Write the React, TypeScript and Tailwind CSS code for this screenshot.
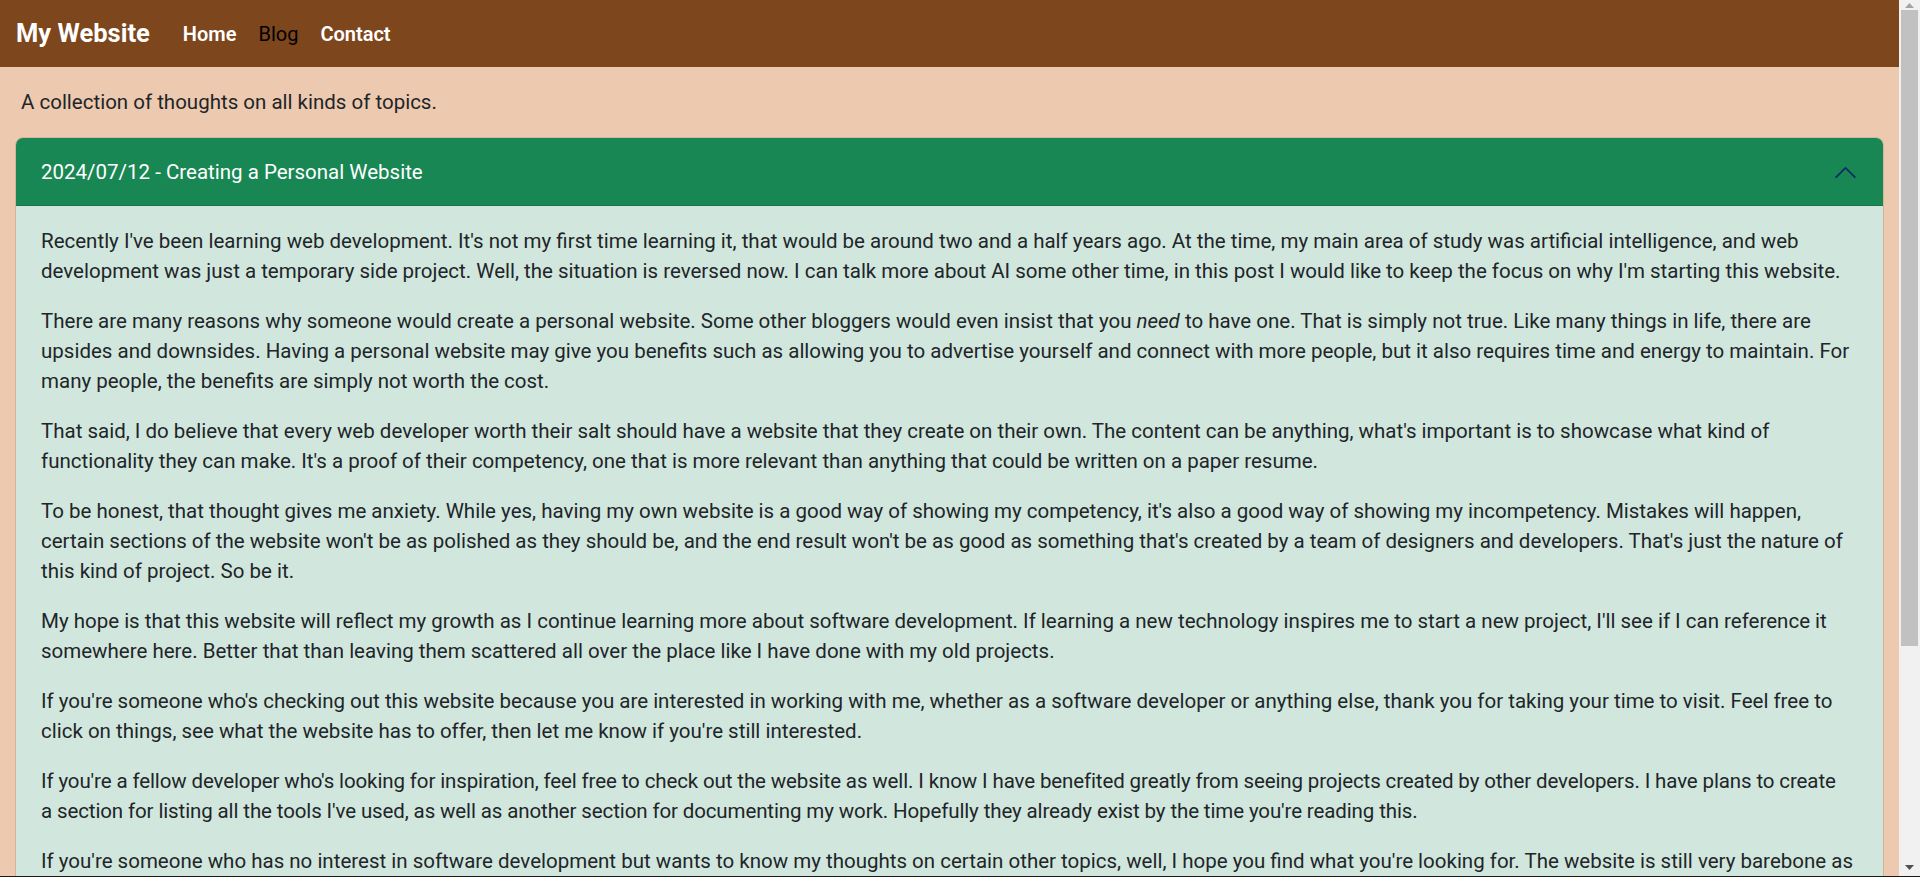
import React from "react";

const paragraphs: React.ReactNode[] = [
  "Recently I've been learning web development. It's not my first time learning it, that would be around two and a half years ago. At the time, my main area of study was artificial intelligence, and web development was just a temporary side project. Well, the situation is reversed now. I can talk more about AI some other time, in this post I would like to keep the focus on why I'm starting this website.",
  <>
    There are many reasons why someone would create a personal website. Some other bloggers would even insist that you <em>need</em> to have one. That is simply not true. Like many things in life, there are upsides and downsides. Having a personal website may give you benefits such as allowing you to advertise yourself and connect with more people, but it also requires time and energy to maintain. For many people, the benefits are simply not worth the cost.
  </>,
  "That said, I do believe that every web developer worth their salt should have a website that they create on their own. The content can be anything, what's important is to showcase what kind of functionality they can make. It's a proof of their competency, one that is more relevant than anything that could be written on a paper resume.",
  "To be honest, that thought gives me anxiety. While yes, having my own website is a good way of showing my competency, it's also a good way of showing my incompetency. Mistakes will happen, certain sections of the website won't be as polished as they should be, and the end result won't be as good as something that's created by a team of designers and developers. That's just the nature of this kind of project. So be it.",
  "My hope is that this website will reflect my growth as I continue learning more about software development. If learning a new technology inspires me to start a new project, I'll see if I can reference it somewhere here. Better that than leaving them scattered all over the place like I have done with my old projects.",
  "If you're someone who's checking out this website because you are interested in working with me, whether as a software developer or anything else, thank you for taking your time to visit. Feel free to click on things, see what the website has to offer, then let me know if you're still interested.",
  <span className="tracking-[-0.12px]">
    If you're a fellow developer who's looking for inspiration, feel free to check out the website as well. I know I have benefited greatly from seeing projects created by other developers. I have plans to create
    <br />a section for listing all the tools I've used, as well as another section for documenting my work. Hopefully they already exist by the time you're reading this.
  </span>,
  "If you're someone who has no interest in software development but wants to know my thoughts on certain other topics, well, I hope you find what you're looking for. The website is still very barebone as of writing this, but I plan to fill it with more content over time. Thank you for reading.",
];

function Scrollbar() {
  return (
    <div className="w-[21px] shrink-0 bg-[#f1f1f1] flex flex-col items-center">
      <div className="h-[10px] w-full flex items-center justify-center">
        <svg width="9" height="5" viewBox="0 0 9 5">
          <path d="M0 5L4.5 0L9 5Z" fill="#a3a3a3" />
        </svg>
      </div>
      <div className="w-[17px] h-[636px] bg-[#c1c1c1]" />
      <div className="flex-1" />
      <div className="h-[17px] w-full flex items-center justify-center">
        <svg width="9" height="5" viewBox="0 0 9 5">
          <path d="M0 0L9 0L4.5 5Z" fill="#505050" />
        </svg>
      </div>
    </div>
  );
}

export default function App() {
  return (
    <div className="h-[877px] w-full flex flex-col overflow-hidden font-['Roboto',_'Liberation_Sans',_sans-serif]">
      <div className="flex flex-1 min-h-0">
        <div className="flex-1 min-w-0 bg-[#edc9af] overflow-hidden flex flex-col">
          <nav className="h-[67px] shrink-0 bg-[#7d461d] flex items-center px-4">
            <span className="text-[25.5px] font-bold text-white mr-[22px] leading-none">My Website</span>
            <a className="px-[11px] text-[20px] font-semibold text-white">Home</a>
            <a className="px-[11px] text-[20px] font-normal text-black">Blog</a>
            <a className="px-[11px] text-[20px] font-semibold text-white">Contact</a>
          </nav>
          <div className="px-[15px]">
            <p className="pt-5 pb-5 pl-[6px] text-[20.5px] leading-[30px] text-[#212529]">
              A collection of thoughts on all kinds of topics.
            </p>
            <div className="rounded-t-[8px] border border-black/10 overflow-hidden">
              <div className="h-[68px] bg-[#198754] flex items-center justify-between pl-[25px] pr-[25px] shadow-[inset_0_-1px_0_rgba(0,0,0,0.125)]">
                <span className="text-white text-[20.5px]">2024/07/12 - Creating a Personal Website</span>
                <svg width="25" height="25" viewBox="0 0 16 16" fill="none" stroke="#052c65" strokeWidth="1.1" strokeLinecap="round" strokeLinejoin="round">
                  <path d="M2 11L8 5L14 11" />
                </svg>
              </div>
              <div className="bg-[#d1e7dd] px-[25px] pt-5 pb-5 text-[20.5px] leading-[30px] text-[#212529]">
                {paragraphs.map((p, i) => (
                  <p key={i} className="mb-5">{p}</p>
                ))}
              </div>
            </div>
          </div>
        </div>
        <Scrollbar />
      </div>
      <div className="h-px shrink-0 bg-[#1a1a1a]" />
    </div>
  );
}
